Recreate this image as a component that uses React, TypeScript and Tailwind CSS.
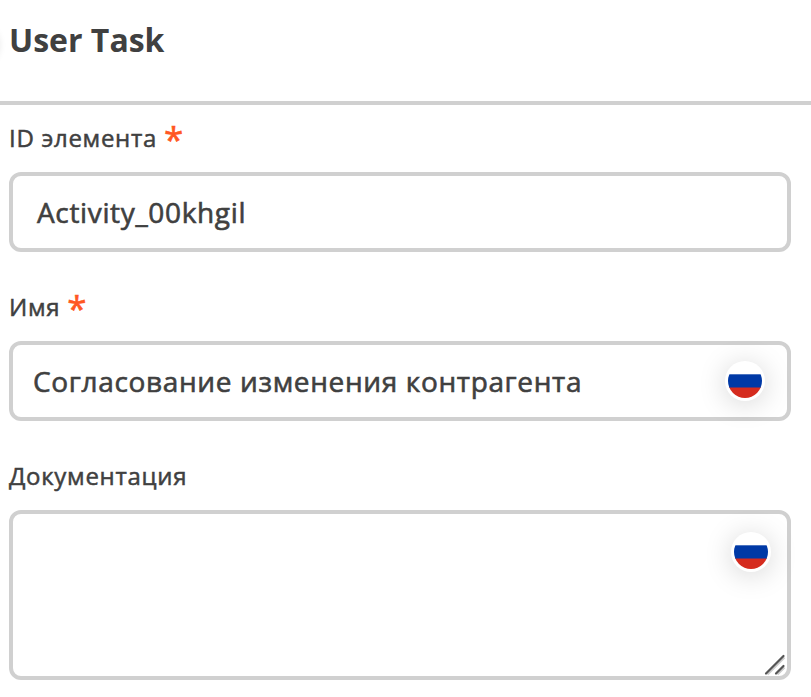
import React from "react";

function Flag() {
  return (
    <span className="flex h-[40px] w-[40px] shrink-0 items-center justify-center rounded-full bg-white shadow-[0_3px_28px_rgba(0,0,0,0.17)]">
      <svg width="34" height="34" viewBox="0 0 34 34">
        <defs>
          <clipPath id="disc">
            <circle cx="17" cy="17" r="17" />
          </clipPath>
        </defs>
        <g clipPath="url(#disc)">
          <rect width="34" height="34" fill="#fff" />
          <rect y="10.3" width="34" height="13.7" fill="#0039a6" />
          <rect y="23.5" width="34" height="11" fill="#d52b1e" />
        </g>
      </svg>
    </span>
  );
}

function Label({ text, required }: { text: string; required?: boolean }) {
  return (
    <label className="flex h-[34px] items-start">
      <span className="text-[24px] leading-[32px] tracking-[0.7px] [-webkit-text-stroke:0.5px_#404040]">{text}</span>
      {required && (
        <span className="ml-[7px] text-[35px] leading-[33px] text-[#ff5722] [-webkit-text-stroke:0.6px_#ff5722]">*</span>
      )}
    </label>
  );
}

export default function App() {
  return (
    <main className="relative flex h-[697px] w-[811px] flex-col overflow-hidden bg-white font-['Open_Sans','Noto_Sans',sans-serif] text-[#404040]">
      <span className="absolute top-[24px] -left-[40px] h-[38px] w-[38px] rounded-full shadow-[0_2px_8px_rgba(0,0,0,0.14)]" />
      <header className="h-[105px] border-b-4 border-[#d0d0d0] pt-[18px] pl-[9px]">
        <h1 className="text-[32px] leading-[44px] font-bold">User Task</h1>
      </header>
      <form className="flex flex-col pt-[17px] pr-[20px] pl-[9px]">
        <Label text="ID элемента" required />
        <div className="mt-[16px] flex h-[80px] items-center rounded-[12px] border-4 border-[#d0d0d0] pl-[24px] text-[28px] tracking-[0.65px] [-webkit-text-stroke:0.6px_#404040]">
          Activity_00khgil
        </div>
        <div className="mt-[39px]">
          <Label text="Имя" required />
        </div>
        <div className="mt-[16px] flex h-[80px] items-center justify-between rounded-[12px] border-4 border-[#d0d0d0] pr-[22px] pl-[20px] text-[28px] tracking-[0.65px] [-webkit-text-stroke:0.6px_#404040]">
          Согласование изменения контрагента
          <Flag />
        </div>
        <div className="mt-[39px]">
          <Label text="Документация" />
        </div>
        <div className="mt-[16px] flex h-[170px] flex-col items-end justify-between rounded-[12px] border-4 border-[#d0d0d0] pt-[18px] pr-[16px]">
          <Flag />
          <svg width="22" height="22" viewBox="0 0 22 22" className="-mr-[15px]">
            <path d="M3.5 20.5 20.5 3.5M13.5 20.5l7-7" stroke="#ccc" strokeWidth="2" />
            <path d="M2 19.5 19.5 2M12 19.5l7.5-7.5" stroke="#555" strokeWidth="2.2" strokeLinecap="round" />
          </svg>
        </div>
      </form>
    </main>
  );
}
